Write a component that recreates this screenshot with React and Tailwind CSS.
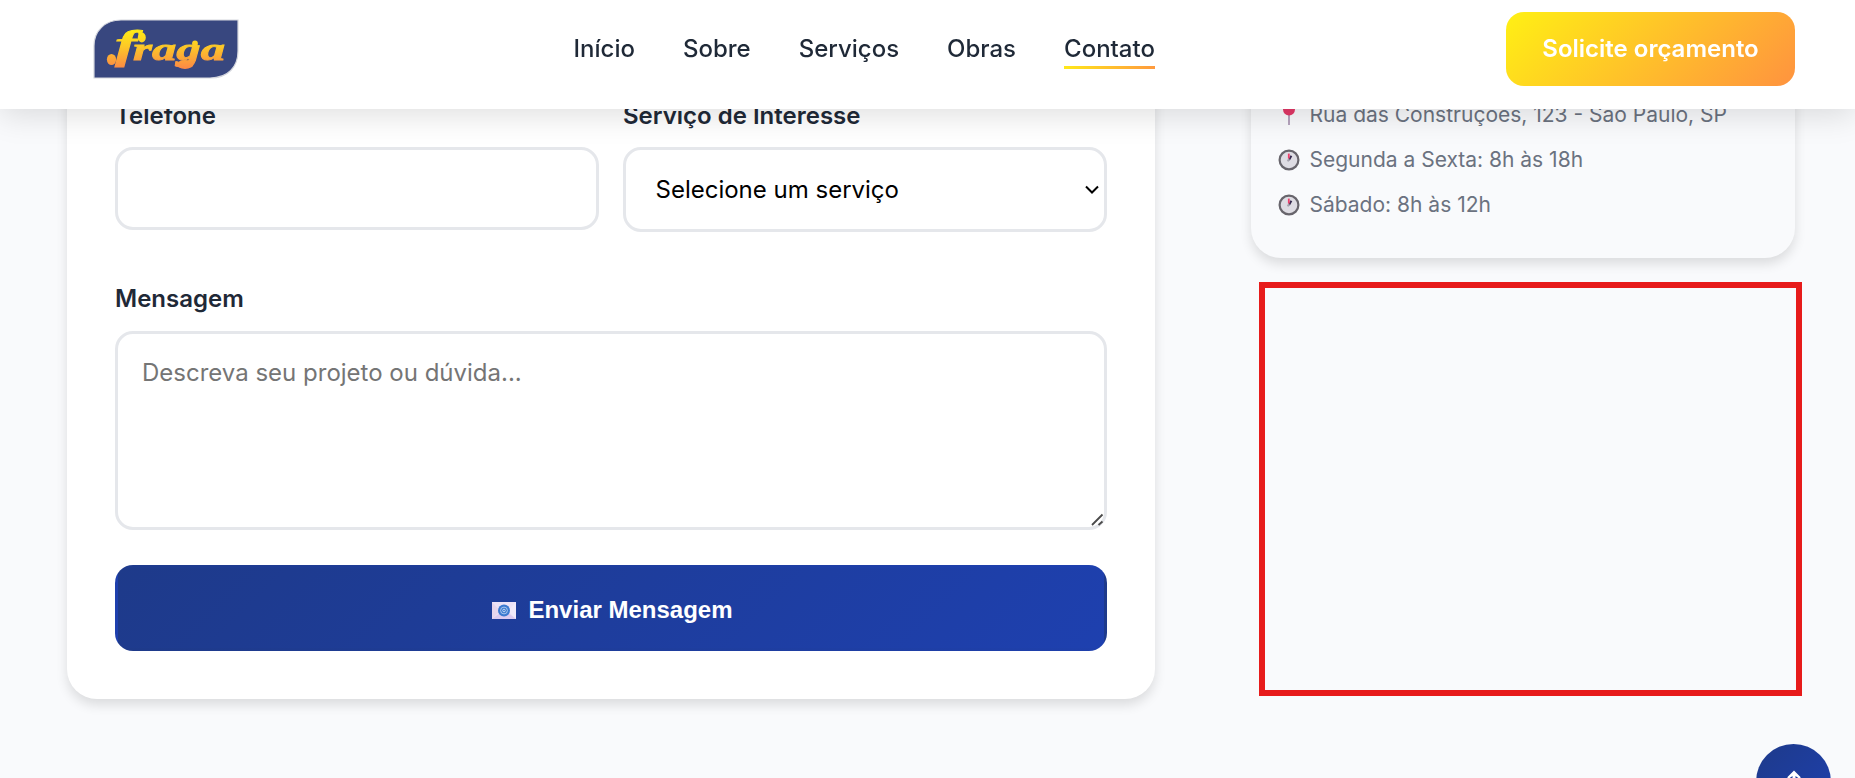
const services = ['Selecione um serviço', 'Construção', 'Reforma'];
const links = ['Início', 'Sobre', 'Serviços', 'Obras'];

function Logo() {
  return (
    <svg className="block h-[61px] w-[147px]" viewBox="0 0 147 61" role="img" aria-label="fraga">
      <defs>
        <linearGradient id="gold" gradientUnits="userSpaceOnUse" x1="0" y1="10" x2="0" y2="49">
          <stop offset="0" stopColor="#ffee14" />
          <stop offset="0.45" stopColor="#fdc827" />
          <stop offset="1" stopColor="#fb8a45" />
        </linearGradient>
      </defs>
      <path d="M28 1H145V32C145 48 135 59 117 59H1V27C1 12 12 1 28 1Z" fill="#38477f" stroke="#d5d7de" strokeWidth="1.2" />
      <g fill="url(#gold)" stroke="url(#gold)" className="font-['Liberation_Serif',serif] font-bold italic">
        <text x="22" y="38.5" textLength="22" lengthAdjust="spacingAndGlyphs" strokeWidth="0.8" className="text-[41px]">
          f
        </text>
        <text x="40" y="41" textLength="92" lengthAdjust="spacingAndGlyphs" strokeWidth="0.8" className="text-[32px]">
          raga
        </text>
      </g>
      <g fill="url(#gold)">
        <ellipse cx="18.5" cy="40.5" rx="4.6" ry="5.6" />
        <ellipse cx="48.8" cy="18.5" rx="4" ry="5" />
        <ellipse cx="92" cy="45.5" rx="8.5" ry="4.4" />
        <circle cx="102" cy="24.5" r="2.9" />
      </g>
    </svg>
  );
}

function Clock() {
  return (
    <svg className="block size-[22px]" viewBox="0 0 22 22">
      <circle cx="11" cy="11" r="9.4" fill="#dedce3" stroke="#68656c" strokeWidth="2.2" />
      <path d="M11 11L13.4 6.8" stroke="#35294e" strokeWidth="2" />
      <path d="M10.8 9.6V4.6" stroke="#ee3f6c" strokeWidth="1.8" />
      <path d="M9.8 12.4L11 10" stroke="#a5a2ad" strokeWidth="2" />
    </svg>
  );
}

function Pin() {
  return (
    <svg className="block size-[22px]" viewBox="0 0 22 22">
      <path d="M11 9V21" stroke="#a58fae" strokeWidth="1.6" />
      <circle cx="11" cy="5.6" r="6" fill="#e33867" />
    </svg>
  );
}

function Envelope() {
  return (
    <svg className="block h-[17px] w-6" viewBox="0 0 24 17">
      <path d="M0 0H24V17H0Z" fill="#ece2f7" />
      <path d="M0 0V17L8 9Z" fill="#e6d5ec" />
      <path d="M24 0V17L16 9Z" fill="#f1eafa" />
      <path d="M0 17L9 10H15L24 17Z" fill="#dccbf0" />
      <circle cx="12" cy="8.5" r="6" fill="#3b7ad0" />
      <circle cx="12" cy="8.5" r="3.4" fill="none" stroke="#b4cdf0" strokeWidth="0.9" />
      <circle cx="12" cy="8.5" r="1.3" fill="none" stroke="#c9dcf5" strokeWidth="0.9" />
    </svg>
  );
}

function Header() {
  return (
    <header className="fixed inset-x-0 top-0 z-20 flex h-[109px] items-center bg-white pr-[60px] pb-[11px] pl-[93px] shadow-[0_6px_30px_rgba(0,0,0,0.13)]">
      <Logo />
      <nav className="ml-[333.5px] flex gap-12 font-medium">
        {links.map((l) => (
          <a key={l} href="#">
            {l}
          </a>
        ))}
        <a
          href="#"
          className="relative after:absolute after:inset-x-0 after:bottom-[-1px] after:h-[3px] after:bg-[linear-gradient(90deg,#ffe81a,#ff9a3e)]"
        >
          Contato
        </a>
      </nav>
      <a
        href="#"
        className="ml-auto flex h-[74px] w-[289px] items-center justify-center rounded-[18px] bg-[linear-gradient(135deg,#fff014,#ff933f)] font-semibold text-white"
      >
        Solicite orçamento
      </a>
    </header>
  );
}

function InfoRow({ icon, children }) {
  return (
    <li className="flex h-[33px] items-center gap-[9.5px]">
      {icon}
      <span>{children}</span>
    </li>
  );
}

export default function App() {
  return (
    <div className="h-[778px] overflow-hidden bg-[#f9fafc] font-['Inter',sans-serif] text-[24px] leading-[38.4px] text-[#1f2937]">
      <Header />
      <main className="flex items-start gap-24 pl-[67px]">
        <form className="flex h-[699px] w-[1088px] flex-col rounded-b-[30px] bg-white px-12 pt-[97px] shadow-[0_6px_12px_rgba(0,0,0,0.12)]">
          <div className="grid grid-cols-2 items-start gap-6">
            <div>
              <label className="block h-[50px] font-semibold">Telefone</label>
              <input className="block h-[83px] w-full rounded-[18px] border-[3px] border-[#e5e7eb] bg-white px-6" />
            </div>
            <div>
              <label className="block h-[50px] font-semibold">Serviço de Interesse</label>
              <select className="block h-[85px] w-full appearance-none rounded-[18px] border-[3px] border-[#e5e7eb] bg-white bg-[url('data:image/svg+xml,%3Csvg%20xmlns=%22http://www.w3.org/2000/svg%22%20viewBox=%220%200%2014%209%22%3E%3Cpath%20d=%22M1%201.5L7%207.5L13%201.5%22%20fill=%22none%22%20stroke=%22black%22%20stroke-width=%222%22/%3E%3C/svg%3E')] bg-[length:14px_9px] bg-[position:right_5px_center] bg-no-repeat px-[29.5px] pt-[2px] text-black">
                {services.map((s) => (
                  <option key={s}>{s}</option>
                ))}
              </select>
            </div>
          </div>
          <label className="mt-[48px] block h-[51px] font-semibold">Mensagem</label>
          <textarea
            placeholder="Descreva seu projeto ou dúvida..."
            className="block h-[199px] w-full shrink-0 resize-none rounded-[18px] border-[3px] border-[#e5e7eb] bg-white px-6 py-[24px] leading-[29px] placeholder:text-[#757575]"
          />
          <svg className="-mt-[18px] mr-[3px] h-[14px] w-[14px] shrink-0 self-end" viewBox="0 0 14 14">
            <path d="M2 13L12.5 2.5M8.5 13L12.5 9.5" stroke="#4a4a4a" strokeWidth="1.8" />
          </svg>
          <button
            type="button"
            className="mt-[39px] flex h-[86px] w-full shrink-0 items-center justify-center gap-3 rounded-[18px] border-[3px] border-transparent bg-[linear-gradient(135deg,#1e3a8a,#1e40af)] pt-[4px] pl-[3px] font-['Liberation_Sans',sans-serif] font-bold text-white"
          >
            <Envelope />
            <span>Enviar Mensagem</span>
          </button>
        </form>
        <aside className="w-[551px]">
          <div className="h-[258px] w-[544px] rounded-b-[30px] bg-[#f9fafc] pt-[98px] pl-[27px] shadow-[0_6px_12px_rgba(0,0,0,0.12)]">
            <ul className="flex flex-col gap-3 text-[21px] leading-[33px] text-[#6b7280]">
              <InfoRow icon={<Pin />}>Rua das Construções, 123 - São Paulo, SP</InfoRow>
              <InfoRow icon={<Clock />}>Segunda a Sexta: 8h às 18h</InfoRow>
              <InfoRow icon={<Clock />}>Sábado: 8h às 12h</InfoRow>
            </ul>
          </div>
          <div className="mt-[24px] ml-2 h-[414px] w-[543px] border-[6px] border-[#e71b1b]" />
        </aside>
      </main>
      <button
        type="button"
        className="fixed top-[744px] right-6 flex size-[75px] items-center justify-center rounded-full bg-[linear-gradient(135deg,#1e3a8a,#1e40af)] text-white"
      >
        <svg className="h-6 w-[18px]" viewBox="0 0 18 24">
          <path d="M9 0.5L15.5 7V9.5L10.5 6V23H7.5V6L2.5 9.5V7Z" fill="currentColor" />
        </svg>
      </button>
    </div>
  );
}
